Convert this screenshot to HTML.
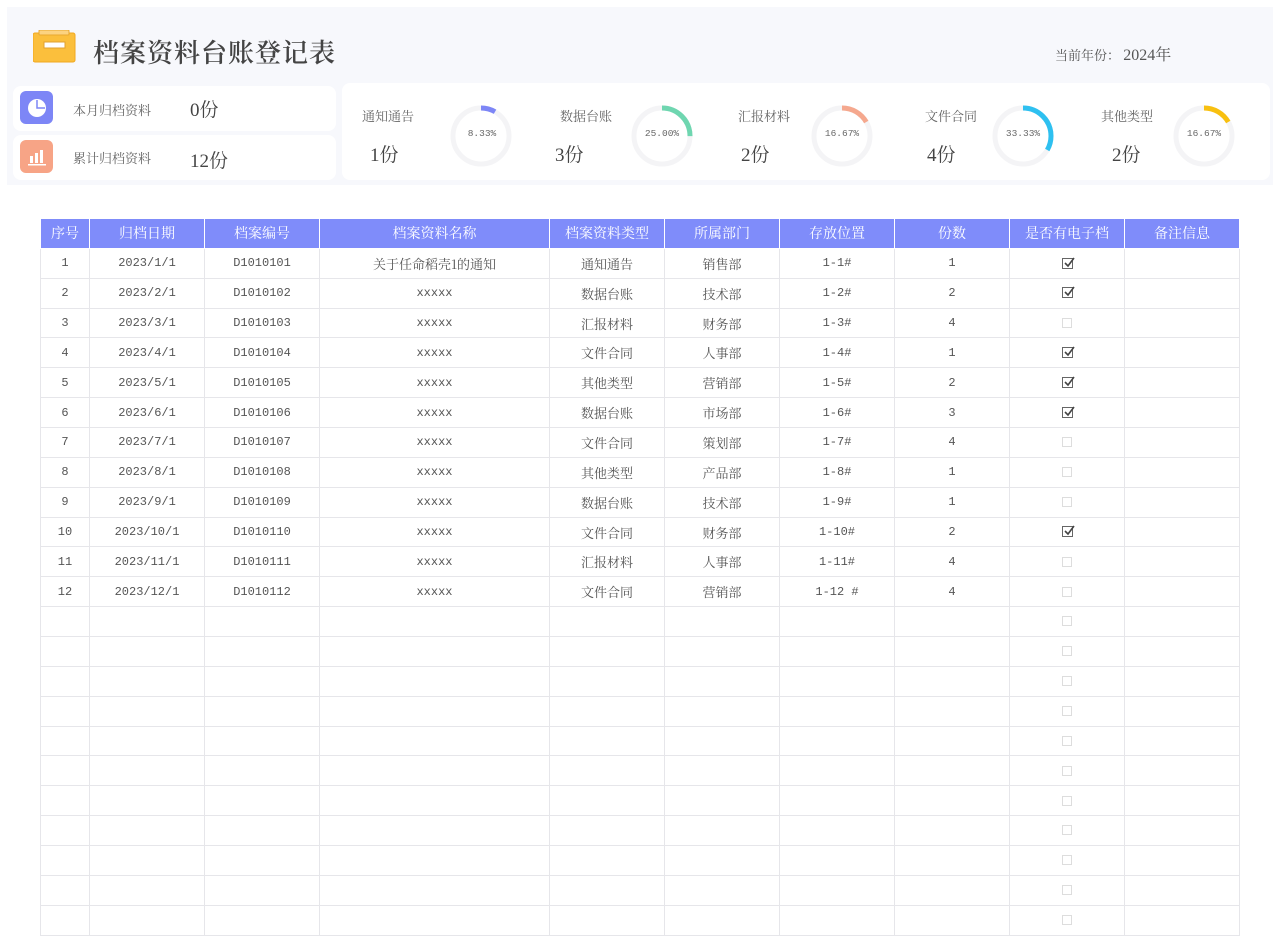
<!DOCTYPE html>
<html><head><meta charset="utf-8"><style>
*{margin:0;padding:0;box-sizing:border-box}
body{width:1280px;height:942px;background:#fff;position:relative;font-family:"Liberation Serif","Noto Serif CJK SC",serif;color:#555;overflow:hidden}
.abs{position:absolute}
.top{left:7px;top:7px;width:1266px;height:178px;background:#f7f8fc}
.card{background:#fff;border-radius:8px}
.lbl{font-size:13px;color:#666}
.big{font-size:19px;color:#444}
table{position:absolute;left:40px;top:218px;border-collapse:collapse;table-layout:fixed;font-size:12px;color:#555;font-family:"Liberation Mono","Noto Serif CJK SC",monospace}
td,th{border:1px solid #e6e6ea;height:29.87px;text-align:center;font-weight:normal;padding:0}
td{font-family:"Liberation Mono","Noto Serif CJK SC",monospace}
th{background:#7f8cfa;color:#fff;font-size:14px;border-color:#fff;font-family:"Noto Serif CJK SC",serif}
.cn{font-family:"Noto Serif CJK SC",serif;font-size:13px}
.cb{display:inline-block;width:10px;height:10px;border:1px solid #ddd;vertical-align:middle}
.ck{display:inline-block;width:11px;height:11px;border:1px solid #666;vertical-align:middle;position:relative}
.ck svg{position:absolute;left:0;top:-2px}
</style></head><body>
<div class="abs top"></div>
<svg class="abs" style="left:33px;top:30px" width="43" height="33" viewBox="0 0 43 33"><rect x="0" y="3" width="42" height="29" rx="2" fill="#fbbf3c" stroke="#f0a820"/><rect x="6" y="0" width="30" height="5" rx="1" fill="#fcd380" stroke="#e8a830"/><rect x="11" y="12" width="21" height="6" fill="#fff" stroke="#e0a030"/></svg>
<div class="abs" style="left:93px;top:33px;font-size:26px;color:#444;font-family:'Noto Serif CJK SC',serif;font-weight:600;letter-spacing:1px">档案资料台账登记表</div>
<div class="abs" style="left:1055px;top:42px;font-size:13px;color:#555">当前年份： <span style="font-size:16px">2024年</span></div>

<div class="abs card" style="left:13px;top:86px;width:323px;height:45px"></div>
<div class="abs card" style="left:13px;top:135px;width:323px;height:45px"></div>
<div class="abs" style="left:20px;top:91px;width:33px;height:33px;border-radius:6px;background:#7d86f6"></div>
<svg class="abs" style="left:26px;top:97px" width="22" height="22" viewBox="0 0 22 22"><circle cx="11" cy="11" r="9" fill="#fff"/><path d="M11 3 V11 H19" stroke="#7d86f6" stroke-width="1.5" fill="none"/></svg>
<div class="abs" style="left:20px;top:140px;width:33px;height:33px;border-radius:6px;background:#f7a486"></div>
<svg class="abs" style="left:26px;top:146px" width="22" height="22" viewBox="0 0 22 22"><rect x="4" y="10" width="3" height="7" fill="#fff"/><rect x="9" y="7" width="3" height="10" fill="#fff"/><rect x="14" y="4" width="3" height="13" fill="#fff"/><rect x="2" y="18" width="18" height="1.5" fill="#fff"/></svg>
<div class="abs lbl" style="left:73px;top:100px">本月归档资料</div>
<div class="abs big" style="left:190px;top:95px">0份</div>
<div class="abs lbl" style="left:73px;top:148px">累计归档资料</div>
<div class="abs big" style="left:190px;top:146px">12份</div>

<div class="abs card" style="left:342px;top:83px;width:928px;height:97px"></div>
<svg class="abs" style="left:0;top:0" width="1280" height="200">
<g fill="none" stroke-width="5">
<circle cx="481" cy="136" r="28" stroke="#f4f4f6"/><circle cx="662" cy="136" r="28" stroke="#f4f4f6"/><circle cx="842" cy="136" r="28" stroke="#f4f4f6"/><circle cx="1023" cy="136" r="28" stroke="#f4f4f6"/><circle cx="1204" cy="136" r="28" stroke="#f4f4f6"/>
<circle cx="481" cy="136" r="28" stroke="#7d86f6" stroke-dasharray="14.7 200" transform="rotate(-90 481 136)"/>
<circle cx="662" cy="136" r="28" stroke="#6fd6b0" stroke-dasharray="44 200" transform="rotate(-90 662 136)"/>
<circle cx="842" cy="136" r="28" stroke="#f5a88e" stroke-dasharray="29.3 200" transform="rotate(-90 842 136)"/>
<circle cx="1023" cy="136" r="28" stroke="#2ec0f0" stroke-dasharray="58.6 200" transform="rotate(-90 1023 136)"/>
<circle cx="1204" cy="136" r="28" stroke="#f8c010" stroke-dasharray="29.3 200" transform="rotate(-90 1204 136)"/>
</g>
<g font-size="9.5" fill="#666" text-anchor="middle" font-family="Liberation Mono,monospace">
<text x="482" y="136">8.33%</text><text x="662" y="136">25.00%</text><text x="842" y="136">16.67%</text><text x="1023" y="136">33.33%</text><text x="1204" y="136">16.67%</text></g>
</svg>
<div class="abs lbl" style="left:362px;top:106px">通知通告</div><div class="abs big" style="left:370px;top:140px">1份</div>
<div class="abs lbl" style="left:560px;top:106px">数据台账</div><div class="abs big" style="left:555px;top:140px">3份</div>
<div class="abs lbl" style="left:738px;top:106px">汇报材料</div><div class="abs big" style="left:741px;top:140px">2份</div>
<div class="abs lbl" style="left:925px;top:106px">文件合同</div><div class="abs big" style="left:927px;top:140px">4份</div>
<div class="abs lbl" style="left:1101px;top:106px">其他类型</div><div class="abs big" style="left:1112px;top:140px">2份</div>

<table>
<colgroup><col style="width:49px"><col style="width:115px"><col style="width:115px"><col style="width:230px"><col style="width:115px"><col style="width:115px"><col style="width:115px"><col style="width:115px"><col style="width:115px"><col style="width:115px"></colgroup>
<tr><th>序号</th><th>归档日期</th><th>档案编号</th><th>档案资料名称</th><th>档案资料类型</th><th>所属部门</th><th>存放位置</th><th>份数</th><th>是否有电子档</th><th>备注信息</th></tr>
<tbody id="b"></tbody>
</table>
<script>
var d=[["1","2023/1/1","D1010101","关于任命稻壳1的通知","通知通告","销售部","1-1#","1",1],
["2","2023/2/1","D1010102","xxxxx","数据台账","技术部","1-2#","2",1],
["3","2023/3/1","D1010103","xxxxx","汇报材料","财务部","1-3#","4",0],
["4","2023/4/1","D1010104","xxxxx","文件合同","人事部","1-4#","1",1],
["5","2023/5/1","D1010105","xxxxx","其他类型","营销部","1-5#","2",1],
["6","2023/6/1","D1010106","xxxxx","数据台账","市场部","1-6#","3",1],
["7","2023/7/1","D1010107","xxxxx","文件合同","策划部","1-7#","4",0],
["8","2023/8/1","D1010108","xxxxx","其他类型","产品部","1-8#","1",0],
["9","2023/9/1","D1010109","xxxxx","数据台账","技术部","1-9#","1",0],
["10","2023/10/1","D1010110","xxxxx","文件合同","财务部","1-10#","2",1],
["11","2023/11/1","D1010111","xxxxx","汇报材料","人事部","1-11#","4",0],
["12","2023/12/1","D1010112","xxxxx","文件合同","营销部","1-12 #","4",0]];
var h="";
var ck='<span class="ck"><svg width="12" height="12" viewBox="0 0 12 12"><path d="M2 6 L5 9 L11 1" stroke="#444" stroke-width="1.6" fill="none"/></svg></span>';
for(var i=0;i<23;i++){var r=d[i]||["","","","","","","","",0];
h+="<tr>";for(var j=0;j<8;j++){var c=(j==3&&i==0)||j==4||j==5?' class="cn"':'';h+="<td"+c+">"+r[j]+"</td>";}
h+="<td>"+(r[8]?ck:'<span class="cb"></span>')+"</td><td></td></tr>";}
document.getElementById("b").innerHTML=h;
</script>
</body></html>
